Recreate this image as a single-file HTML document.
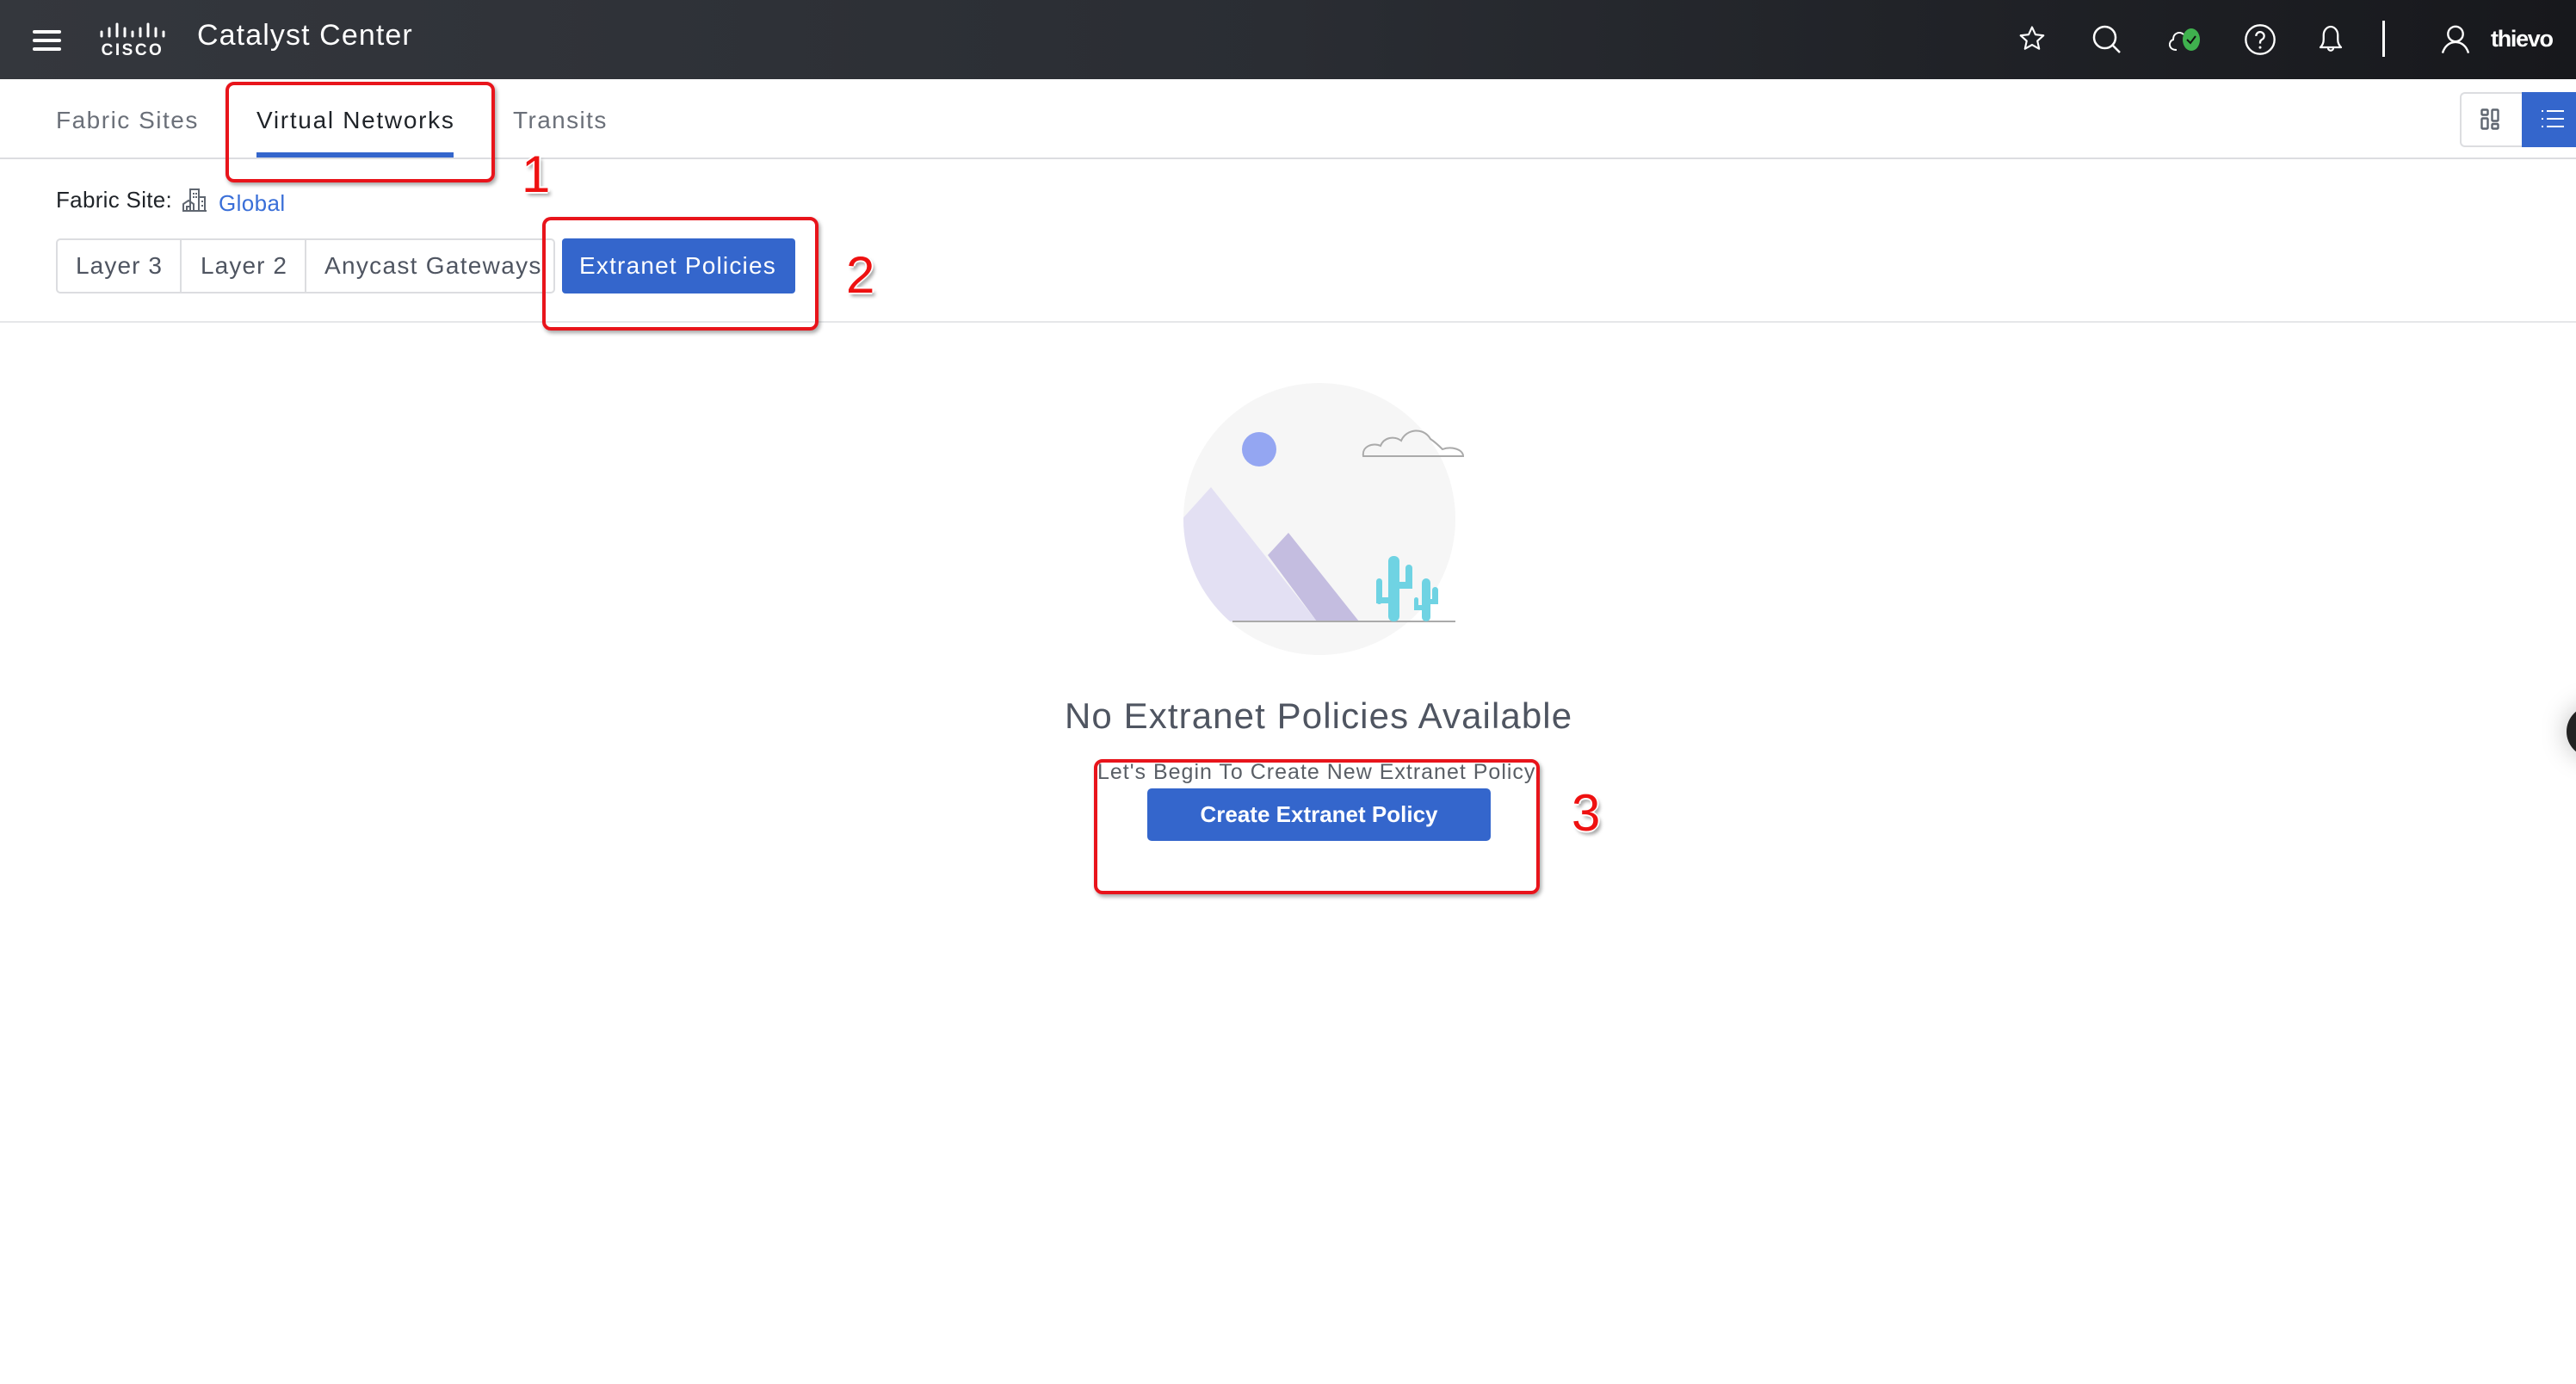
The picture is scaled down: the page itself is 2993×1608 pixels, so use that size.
<!DOCTYPE html>
<html><head><meta charset="utf-8"><style>
*{margin:0;padding:0;box-sizing:border-box}
body{width:2993px;height:1608px;background:#fff;position:relative;overflow:hidden;font-family:"Liberation Sans",sans-serif}
.a{position:absolute;white-space:nowrap}
.hdr{position:absolute;left:0;top:0;width:2993px;height:92px;background:linear-gradient(90deg,#34373d 0%,#2a2d33 50%,#17181c 100%)}
.red{position:absolute;border:4px solid #e8141b;border-radius:10px;box-shadow:2px 3px 5px rgba(0,0,0,.35)}
.num{position:absolute;color:#ee1111;font-size:60px;font-family:"Liberation Sans",sans-serif;text-shadow:-2px 0 #fff,2px 0 #fff,0 -2px #fff,0 2px #fff,3px 4px 4px rgba(0,0,0,.4)}
</style></head><body>
<div class="hdr"></div>
<div class="a" style="left:38px;top:35px;width:33px;height:4px;background:#fff;border-radius:2px"></div>
<div class="a" style="left:38px;top:45px;width:33px;height:4px;background:#fff;border-radius:2px"></div>
<div class="a" style="left:38px;top:55px;width:33px;height:4px;background:#fff;border-radius:2px"></div>
<svg class="a" style="left:115px;top:24px" width="80" height="42" viewBox="0 0 80 42">
<g stroke="#fff" stroke-width="3" stroke-linecap="round">
<line x1="3" y1="13" x2="3" y2="18"/><line x1="12" y1="9" x2="12" y2="18"/><line x1="21" y1="4" x2="21" y2="18"/><line x1="30" y1="9" x2="30" y2="18"/><line x1="39" y1="13" x2="39" y2="18"/><line x1="48" y1="9" x2="48" y2="18"/><line x1="57" y1="4" x2="57" y2="18"/><line x1="66" y1="9" x2="66" y2="18"/><line x1="75" y1="13" x2="75" y2="18"/>
</g>
<text x="39" y="40" fill="#fff" font-size="19" font-weight="bold" text-anchor="middle" letter-spacing="2.5" font-family="Liberation Sans">CISCO</text>
</svg>
<div class="a" style="left:229px;top:22px;font-size:34px;color:#fff;letter-spacing:1.1px">Catalyst Center</div>
<svg class="a" style="left:2344px;top:28px" width="34" height="34" viewBox="0 0 24 24"><path d="M12 2.5l2.8 6.1 6.6.7-5 4.5 1.4 6.5L12 17l-5.8 3.3 1.4-6.5-5-4.5 6.6-.7z" fill="none" stroke="#fff" stroke-width="1.5" stroke-linejoin="round"/></svg>
<svg class="a" style="left:2428px;top:26px" width="40" height="40" viewBox="0 0 24 24"><circle cx="10.5" cy="10.5" r="7.5" fill="none" stroke="#fff" stroke-width="1.5"/><line x1="16" y1="16" x2="21" y2="21" stroke="#fff" stroke-width="1.5"/></svg>
<svg class="a" style="left:2515px;top:28px" width="46" height="36" viewBox="0 0 46 36"><path d="M14 30 C4 30 4 20 10 18 C10 10 18 8 22 12" fill="none" stroke="#fff" stroke-width="2"/><ellipse cx="31" cy="18" rx="10" ry="13" fill="#3fb14e"/><path d="M26 18l4 4 6-8" fill="none" stroke="#111" stroke-width="2"/></svg>
<svg class="a" style="left:2606px;top:26px" width="40" height="40" viewBox="0 0 24 24"><circle cx="12" cy="12" r="10" fill="none" stroke="#fff" stroke-width="1.4"/><path d="M9.2 9.5a2.8 2.8 0 1 1 4 2.5c-.9.5-1.2 1-1.2 2v.8" fill="none" stroke="#fff" stroke-width="1.4"/><circle cx="12" cy="17.5" r=".9" fill="#fff"/></svg>
<svg class="a" style="left:2690px;top:26px" width="36" height="40" viewBox="0 0 24 26"><path d="M4 19h16c-1.5-1.5-2.5-3-2.5-6V9.5C17.5 6 15 3 12 3S6.5 6 6.5 9.5V13c0 3-1 4.5-2.5 6z" fill="none" stroke="#fff" stroke-width="1.5" stroke-linejoin="round"/><path d="M10 19.5a2 2 0 0 0 4 0" fill="none" stroke="#fff" stroke-width="1.5"/></svg>
<div class="a" style="left:2768px;top:24px;width:3px;height:42px;background:#fff"></div>
<svg class="a" style="left:2834px;top:26px" width="38" height="38" viewBox="0 0 24 24"><circle cx="12" cy="8.5" r="5.5" fill="none" stroke="#fff" stroke-width="1.5"/><path d="M2.5 22.5c1.5-5 5-8 9.5-8s8 3 9.5 8" fill="none" stroke="#fff" stroke-width="1.5"/></svg>
<div class="a" style="left:2894px;top:30px;font-size:27px;font-weight:bold;color:#fff;letter-spacing:-1.3px">thievo</div>
<div class="a" style="left:65px;top:124px;font-size:28px;color:#6b7079;letter-spacing:1.5px">Fabric Sites</div>
<div class="a" style="left:298px;top:124px;font-size:28px;color:#1f2328;letter-spacing:1.7px">Virtual Networks</div>
<div class="a" style="left:596px;top:124px;font-size:28px;color:#6b7079;letter-spacing:1.4px">Transits</div>
<div class="a" style="left:298px;top:177px;width:229px;height:6px;background:#3466cc"></div>
<div class="a" style="left:0;top:183px;width:2993px;height:2px;background:#dcdde0"></div>
<div class="a" style="left:2858px;top:107px;width:72px;height:64px;border:2px solid #dcdde0;border-right:none;border-radius:6px 0 0 6px;background:#fff"></div>
<svg class="a" style="left:2882px;top:126px" width="24" height="26" viewBox="0 0 24 26"><g fill="none" stroke="#5f6670" stroke-width="2.4"><rect x="1.5" y="1.5" width="7" height="6" rx="1"/><rect x="1.5" y="11.5" width="7" height="12" rx="1"/><rect x="13.5" y="1.5" width="7" height="13" rx="1"/><rect x="13.5" y="18" width="7" height="5.5" rx="1"/></g></svg>
<div class="a" style="left:2930px;top:107px;width:63px;height:64px;background:#3466cc"></div>
<svg class="a" style="left:2951px;top:126px" width="30" height="26" viewBox="0 0 30 26"><g fill="#fff"><rect x="8" y="2" width="20" height="2"/><rect x="8" y="11" width="20" height="2"/><rect x="8" y="20" width="20" height="2"/><rect x="2" y="2" width="2" height="2"/><rect x="2" y="11" width="2" height="2"/><rect x="2" y="20" width="2" height="2"/></g></svg>
<div class="a" style="left:65px;top:217px;font-size:26px;color:#1f2328;letter-spacing:0.3px">Fabric Site:</div>
<svg class="a" style="left:211px;top:217px" width="30" height="30" viewBox="0 0 30 30"><g fill="none" stroke="#5f6670" stroke-width="2"><path d="M10 28V3h10v25"/><path d="M20 12h7v16"/><path d="M2 28v-8l6-4 6 4v8"/><path d="M6 28v-5h4v5"/><line x1="1" y1="28" x2="29" y2="28"/></g><g fill="#5f6670"><rect x="13" y="7" width="2" height="2"/><rect x="16" y="7" width="2" height="2"/><rect x="13" y="11" width="2" height="2"/><rect x="16" y="11" width="2" height="2"/><rect x="23" y="16" width="2" height="2"/><rect x="23" y="21" width="2" height="2"/></g></svg>
<div class="a" style="left:254px;top:221px;font-size:26px;color:#3a6fd8;letter-spacing:0.4px">Global</div>
<div class="a" style="left:65px;top:277px;width:580px;height:64px;border:2px solid #dcdde0;border-radius:5px"></div>
<div class="a" style="left:209px;top:277px;width:2px;height:64px;background:#dcdde0"></div>
<div class="a" style="left:354px;top:277px;width:2px;height:64px;background:#dcdde0"></div>
<div class="a" style="left:88px;top:293px;font-size:28px;color:#4f5561;letter-spacing:1.1px">Layer 3</div>
<div class="a" style="left:233px;top:293px;font-size:28px;color:#4f5561;letter-spacing:1.1px">Layer 2</div>
<div class="a" style="left:377px;top:293px;font-size:28px;color:#4f5561;letter-spacing:1.3px">Anycast Gateways</div>
<div class="a" style="left:653px;top:277px;width:271px;height:64px;background:#3466cc;border-radius:4px"></div>
<div class="a" style="left:673px;top:293px;font-size:28px;color:#fff;letter-spacing:1.2px">Extranet Policies</div>
<div class="a" style="left:0;top:373px;width:2993px;height:2px;background:#e6e7e9"></div>
<svg class="a" style="left:1360px;top:440px" width="360" height="330" viewBox="1360 440 360 330">
<defs><clipPath id="c"><circle cx="1533" cy="603" r="158"/></clipPath></defs>
<circle cx="1533" cy="603" r="158" fill="#f6f6f6"/>
<g clip-path="url(#c)">
<polygon points="1340,640 1407,566 1530,722 1340,722" fill="#e3e0f3"/>
<polygon points="1473,645 1497,619 1579,722 1530,722" fill="#c4bde0"/>
</g>
<circle cx="1463" cy="522" r="20" fill="#94a6f2"/>
<path d="M1584 530 C1582 518 1596 514 1604 518 C1608 508 1620 506 1628 512 C1634 498 1654 496 1662 510 C1668 514 1672 518 1676 522 C1686 518 1700 522 1700 530 Z" fill="none" stroke="#aaa" stroke-width="2"/>
<line x1="1432" y1="722" x2="1691" y2="722" stroke="#aaa" stroke-width="2"/>
<g fill="#6fd3e3">
<rect x="1613" y="646" width="13" height="76" rx="6"/>
<rect x="1599" y="672" width="7" height="30" rx="3.5"/>
<rect x="1599" y="694" width="20" height="7"/>
<rect x="1633" y="656" width="8" height="28" rx="4"/>
<rect x="1622" y="676" width="19" height="8"/>
<rect x="1652" y="672" width="10" height="50" rx="5"/>
<rect x="1643" y="694" width="5" height="15" rx="2.5"/>
<rect x="1643" y="703" width="12" height="6"/>
<rect x="1664" y="682" width="7" height="20" rx="3.5"/>
<rect x="1658" y="696" width="13" height="6"/>
</g>
</svg>
<div class="a" style="left:1237px;top:808px;font-size:42px;color:#4f5561;letter-spacing:1.1px">No Extranet Policies Available</div>
<div class="a" style="left:1275px;top:883px;font-size:25px;color:#5a5f66;letter-spacing:1px">Let's Begin To Create New Extranet Policy.</div>
<div class="a" style="left:1333px;top:916px;width:399px;height:61px;background:#3466cc;border-radius:5px"></div>
<div class="a" style="left:1333px;top:931px;width:399px;text-align:center;font-size:26px;color:#fff;font-weight:bold">Create Extranet Policy</div>
<div class="a" style="left:2982px;top:820px;width:60px;height:60px;border-radius:50%;background:#222;box-shadow:0 0 30px rgba(0,0,0,.25)"></div>
<div class="red" style="left:262px;top:95px;width:313px;height:117px"></div>
<div class="num" style="left:606px;top:168px">1</div>
<div class="red" style="left:630px;top:252px;width:321px;height:132px"></div>
<div class="num" style="left:983px;top:285px">2</div>
<div class="red" style="left:1271px;top:882px;width:518px;height:157px"></div>
<div class="num" style="left:1826px;top:910px">3</div>
</body></html>
